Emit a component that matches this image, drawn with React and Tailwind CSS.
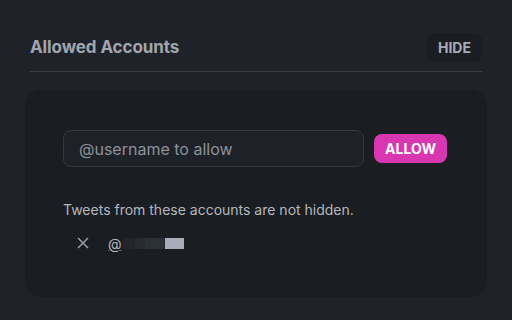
export default function App() {
  return (
    <div className="w-[512px] h-[320px] bg-[#1f2329] px-[25px] pt-[33px] overflow-hidden" style={{ fontFamily: "Inter, 'Noto Sans', sans-serif" }}>
      <div className="mx-[5px] flex items-center justify-between pb-[9px] border-b border-[#3b3f46]">
        <div className="text-[17px] font-bold text-[#a0a5af] tracking-[-0.1px]">Allowed Accounts</div>
        <button className="h-[29px] px-[11px] rounded-[8px] bg-[#1a1d22] text-[14px] font-bold text-[#a7abb5]">HIDE</button>
      </div>
      <div className="mt-[18px] h-[207px] rounded-[16px] bg-[#1a1d22] pt-[40px] px-[38px]">
        <div className="flex items-center gap-[10px]">
          <div className="w-[301px] h-[37px] rounded-[8px] border border-[#34383f] bg-[#1e2128] flex items-center px-[15px] text-[16px] text-[#8d929b]">
            @username to allow
          </div>
          <button className="h-[29px] w-[73px] rounded-[8px] bg-[#d936b1] text-white text-[14px] font-bold">ALLOW</button>
        </div>
        <div className="mt-[32px] text-[14px] text-[#b3b7bf]">Tweets from these accounts are not hidden.</div>
        <div className="mt-[16px] flex items-center h-[14px] pl-[14px]">
          <svg width="12" height="12" viewBox="0 0 12 12" className="text-[#a2a6af]">
            <path d="M1 1 L11 11 M11 1 L1 11" stroke="currentColor" strokeWidth="1.4" />
          </svg>
          <span className="ml-[19px] text-[14px] text-[#b3b7bf] underline decoration-[#6b7079]">@</span>
          <div className="ml-[1px] flex h-[11px]">
            <div className="w-[12px] bg-[#22252b]"></div>
            <div className="w-[10px] bg-[#272a31]"></div>
            <div className="w-[19px] bg-[#2c3037]"></div>
            <div className="w-[1px] bg-[#22252b]"></div>
            <div className="w-[19px] bg-[#a9adb9]"></div>
          </div>
        </div>
      </div>
    </div>
  );
}
